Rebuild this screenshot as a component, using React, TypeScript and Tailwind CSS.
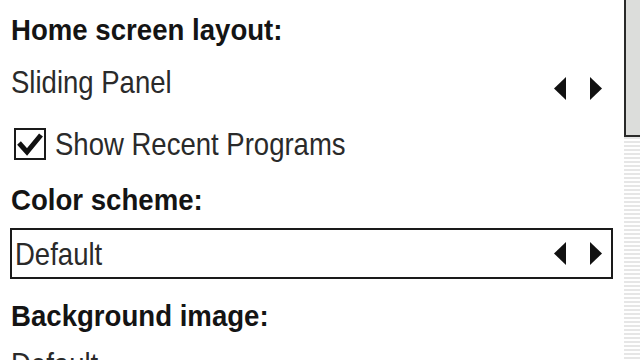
import React from 'react';

const font = { fontFamily: '"Liberation Sans", Arial, sans-serif' };

function Arrows({ className = '' }: { className?: string }) {
  return (
    <div className={`flex items-center gap-[24px] shrink-0 ${className}`}>
      <svg width="12" height="23" viewBox="0 0 12 23">
        <polygon points="12,0 12,23 0,11.5" fill="#111" />
      </svg>
      <svg width="12" height="23" viewBox="0 0 12 23">
        <polygon points="0,0 0,23 12,11.5" fill="#111" />
      </svg>
    </div>
  );
}

function Heading({ children, className = '' }: { children: React.ReactNode; className?: string }) {
  return (
    <div className={`h-[36px] shrink-0 ${className}`}>
      <span className="inline-block origin-left scale-x-[0.92] leading-[36px] text-[30px] font-bold text-[#141414] whitespace-nowrap">
        {children}
      </span>
    </div>
  );
}

function Value({ children }: { children: React.ReactNode }) {
  return (
    <span className="inline-block origin-left scale-x-[0.86] leading-[36px] text-[32px] text-[#2a2a2a] whitespace-nowrap">
      {children}
    </span>
  );
}

export default function App() {
  return (
    <div className="w-[640px] h-[360px] bg-white flex overflow-hidden" style={font}>
      {/* ── Settings list ─────────────────────── */}
      <div className="flex-1 flex flex-col pl-[10px] pr-[11px] pt-[12px]">
        <Heading className="pl-[1px]">Home screen layout:</Heading>

        <div className="mt-[16px] h-[36px] shrink-0 flex items-center justify-between pl-[1px]">
          <Value>Sliding Panel</Value>
          <Arrows className="mr-[11px] mt-[12px]" />
        </div>

        <div className="mt-[26px] h-[36px] shrink-0 flex items-center pl-[4px]">
          <div className="w-[32px] h-[32px] shrink-0 border-2 border-[#1a1a1a] bg-white flex items-center justify-center">
            <svg width="28" height="28" viewBox="0 0 28 28">
              <polyline points="3,13 11,22 25,5" fill="none" stroke="#111" strokeWidth="5" strokeLinejoin="miter" />
            </svg>
          </div>
          <div className="ml-[9px]">
            <Value>Show Recent Programs</Value>
          </div>
        </div>

        <Heading className="mt-[20px] pl-[1px]">Color scheme:</Heading>

        <div className="mt-[10px] h-[51px] shrink-0 border-2 border-[#1a1a1a] flex items-center justify-between pl-[3px]">
          <Value>Default</Value>
          <Arrows className="mr-[9px]" />
        </div>

        <Heading className="mt-[19px] pl-[1px]">Background image:</Heading>

        <div className="mt-[12px] h-[36px] shrink-0 flex items-center pl-[1px]">
          <Value>Default</Value>
        </div>
      </div>

      {/* ── Scrollbar ─────────────────────────── */}
      <div className="w-[16px] shrink-0 flex flex-col">
        <div className="h-[137px] shrink-0 bg-[#dcdddb] border-l-2 border-b-2 border-[#2a2a2a]" />
        <div className="flex-1 bg-[repeating-linear-gradient(to_bottom,#e6e6e6_0px,#e6e6e6_2px,#ffffff_2px,#ffffff_4px)]" />
      </div>
    </div>
  );
}
